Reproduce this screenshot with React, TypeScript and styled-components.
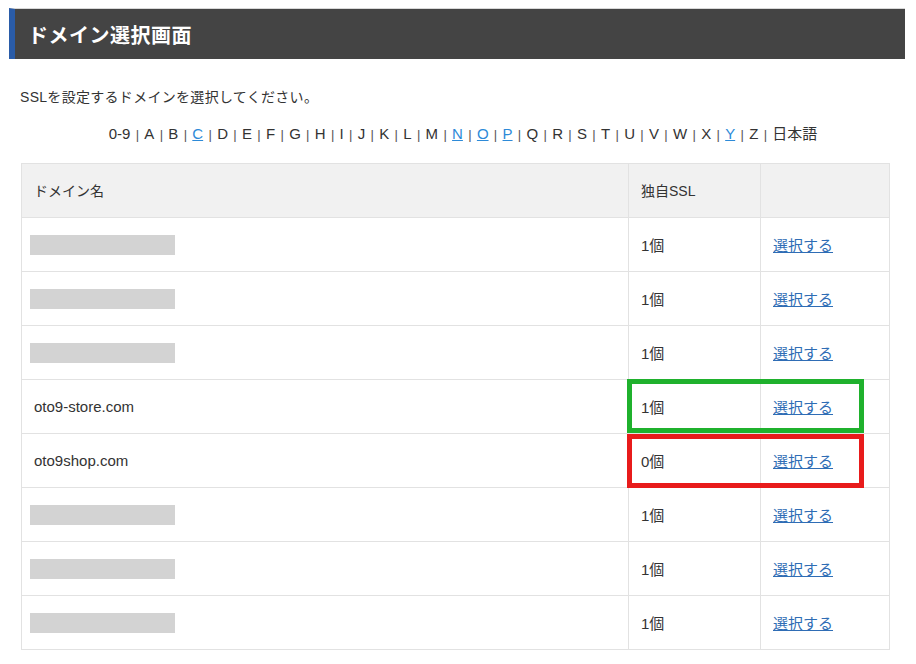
import styled, { createGlobalStyle } from "styled-components"

const GlobalStyle = createGlobalStyle`
  html, body {
    margin: 0;
    padding: 0;
    background: #fff;
  }
  body {
    font-family: "Liberation Sans", "Noto Sans CJK JP", sans-serif;
    color: #333;
  }
`

const letters = [
  "0-9", "A", "B", "C", "D", "E", "F", "G", "H", "I", "J", "K", "L", "M",
  "N", "O", "P", "Q", "R", "S", "T", "U", "V", "W", "X", "Y", "Z", "日本語",
]
// ドメインがある頭文字だけリンク
const linked = ["C", "N", "O", "P", "Y"]

type Row = { name?: string; count: number; mark?: "green" | "red" }

const rows: Row[] = [
  { count: 1 },
  { count: 1 },
  { count: 1 },
  { name: "oto9-store.com", count: 1, mark: "green" },
  { name: "oto9shop.com", count: 0, mark: "red" },
  { count: 1 },
  { count: 1 },
  { count: 1 },
]

const App = () => {
  return (
    <>
      <GlobalStyle />
      <Page>
        <TitleBar>
          <Title>ドメイン選択画面</Title>
        </TitleBar>

        <Lead>SSLを設定するドメインを選択してください。</Lead>

        <Index>
          {letters.map((l, i) => (
            <span key={l}>
              {i > 0 && <Sep>|</Sep>}
              {linked.includes(l) ? <IndexLink href="#">{l}</IndexLink> : <IndexItem>{l}</IndexItem>}
            </span>
          ))}
        </Index>

        <Table>
          <colgroup>
            <col style={{ width: 607 }} />
            <col style={{ width: 132 }} />
            <col />
          </colgroup>
          <thead>
            <tr>
              <Th>ドメイン名</Th>
              <Th>独自SSL</Th>
              <Th></Th>
            </tr>
          </thead>
          <tbody>
            {rows.map((r, i) => (
              <tr key={i}>
                <Td>{r.name ? r.name : <Masked />}</Td>
                <CountTd $mark={r.mark}>{r.count}個</CountTd>
                <Td>
                  <SelectLink href="#">選択する</SelectLink>
                </Td>
              </tr>
            ))}
          </tbody>
        </Table>
      </Page>
    </>
  )
}

export default App

const Page = styled.div`
  width: 916px;
  padding: 8px 0 0 9px;
  box-sizing: border-box;
`

const TitleBar = styled.div`
  width: 896px;
  height: 51px;
  box-sizing: border-box;
  background: #444444;
  border-left: 6px solid #2a5ca8;
  border-top: 1px solid #d8d8d8;
  display: flex;
  align-items: center;
  padding-left: 13px;
`

const Title = styled.h1`
  margin: 0;
  color: #fff;
  font-size: 20px;
  font-weight: bold;
  letter-spacing: 0.5px;
`

const Lead = styled.p`
  margin: 28px 0 0 11px;
  font-size: 14px;
  line-height: 20px;
  letter-spacing: 0.3px;
`

const Index = styled.div`
  width: 896px;
  margin-top: 16px;
  text-align: center;
  font-size: 15px;
  line-height: 22px;
  padding-left: 12px;
  box-sizing: border-box;
`

const Sep = styled.span`
  margin: 0 5.3px;
  color: #555;
  font-size: 13px;
`

const IndexItem = styled.span`
  color: #333;
`

const IndexLink = styled.a`
  color: #2d8ad8;
  text-decoration: underline;
`

const Table = styled.table`
  margin: 17px 0 0 12px;
  width: 869px;
  border-collapse: collapse;
  table-layout: fixed;
  font-size: 15px;
`

const Th = styled.th`
  height: 54px;
  box-sizing: border-box;
  background: #f1f1f1;
  border: 1px solid #e2e2e2;
  text-align: left;
  font-weight: normal;
  font-size: 14px;
  padding: 0 12px;
  color: #333;
  vertical-align: middle;
  padding-bottom: 2px;
`

const Td = styled.td`
  height: 54px;
  box-sizing: border-box;
  border: 1px solid #e2e2e2;
  padding: 0 12px;
  vertical-align: middle;
  color: #333;
`

const CountTd = styled(Td)<{ $mark?: "green" | "red" }>`
  position: relative;

  &::after {
    content: "";
    display: ${(p) => (p.$mark ? "block" : "none")};
    position: absolute;
    left: -2px;
    top: ${(p) => (p.$mark === "red" ? "0" : "-1px")};
    width: 237px;
    height: 54px;
    box-sizing: border-box;
    border: 5px solid ${(p) => (p.$mark === "red" ? "#e81b1b" : "#1fb12d")};
    pointer-events: none;
  }
`

const Masked = styled.div`
  width: 145px;
  height: 20px;
  background: #d3d3d3;
  margin-left: -4px;
`

const SelectLink = styled.a`
  color: #2f6db5;
  text-decoration: underline;
`
